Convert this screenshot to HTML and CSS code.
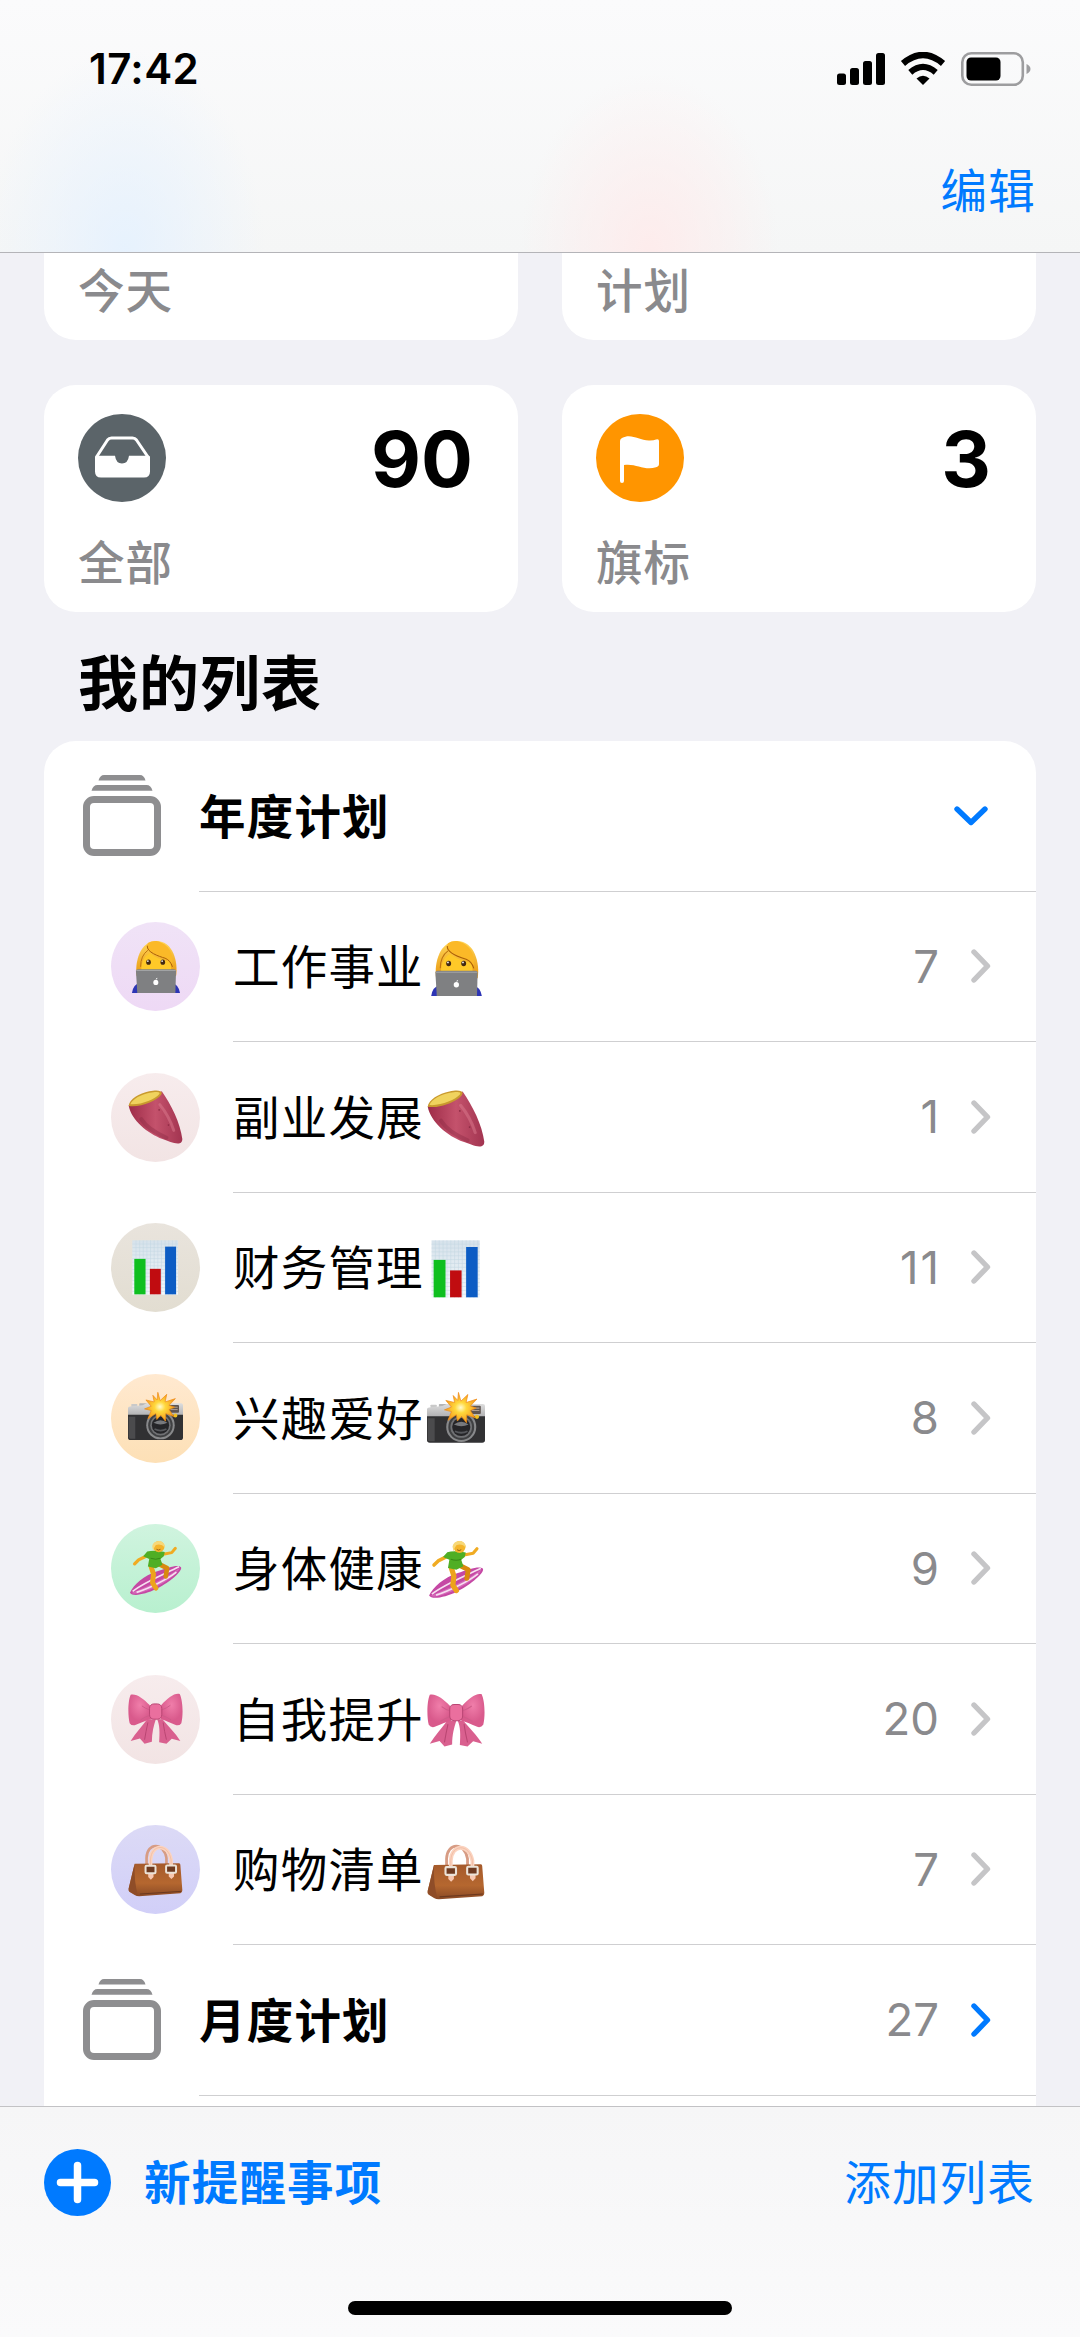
FILE: index.html
```html
<!DOCTYPE html>
<html lang="zh-CN">
<head>
    <meta charset="UTF-8" />
    <meta name="viewport" content="width=device-width, initial-scale=1.0" />
    <title>提醒事项</title>
    <link rel="stylesheet" href="styles.css">
</head>
<body>
    <!-- shared icons -->
    <svg class="sprite" width="0" height="0">
        <defs>
            <linearGradient id="hair" x1="0" y1="0" x2="0" y2="1">
                <stop offset="0" stop-color="#ffd65a"/><stop offset="1" stop-color="#e8960c"/>
            </linearGradient>
            <linearGradient id="skin" x1="0" y1="0" x2="1" y2="0">
                <stop offset="0" stop-color="#9e2c48"/><stop offset="0.5" stop-color="#c4526c"/><stop offset="1" stop-color="#a23450"/>
            </linearGradient>
            <linearGradient id="chartbg" x1="0" y1="0" x2="0" y2="1">
                <stop offset="0" stop-color="#d6e2eb"/><stop offset="1" stop-color="#f4f8fb"/>
            </linearGradient>
            <linearGradient id="silver" x1="0" y1="0" x2="0" y2="1">
                <stop offset="0" stop-color="#dedede"/><stop offset="1" stop-color="#a9a9ab"/>
            </linearGradient>
            <linearGradient id="leather" x1="0" y1="0" x2="0" y2="1">
                <stop offset="0" stop-color="#a55a2c"/><stop offset="0.6" stop-color="#b5672f"/><stop offset="1" stop-color="#8a4a26"/>
            </linearGradient>
            <radialGradient id="burst">
                <stop offset="0" stop-color="#fffbd0"/><stop offset="0.35" stop-color="#ffd83c"/><stop offset="1" stop-color="#f59a1c"/>
            </radialGradient>
            <radialGradient id="pink" cx="0.5" cy="0.35">
                <stop offset="0" stop-color="#f07eaa"/><stop offset="1" stop-color="#d95a8c"/>
            </radialGradient>
        </defs>

        <symbol id="i-stack" viewBox="0 0 78 82">
            <path d="M15.500 5.500Q17 0 21 0H57Q61 0 62.500 5.500Z" fill="#8e8e90"/>
            <path d="M8.500 15.800Q10 10 14.500 10H63.500Q68 10 69.500 15.800Z" fill="#8e8e90"/>
            <rect x="3.500" y="24.500" width="71" height="53" rx="7.500" fill="none" stroke="#8e8e90" stroke-width="7"/>
        </symbol>
        <symbol id="i-right" viewBox="0 0 20 34">
            <path d="M3 3L16.500 17L3 31" fill="none" stroke="currentColor" stroke-width="5.400" stroke-linecap="round" stroke-linejoin="round"/>
        </symbol>
        <symbol id="i-down" viewBox="0 0 34 20">
            <path d="M3 3L17 16.500L31 3" fill="none" stroke="currentColor" stroke-width="5.400" stroke-linecap="round" stroke-linejoin="round"/>
        </symbol>

        <symbol id="e-coder" viewBox="0 0 166 166">
            <path d="M12 163Q16 136 36 133H132Q152 136 157 163Z" fill="#2d35b5"/>
            <path d="M26 112C20 70 36 6 86 6C136 6 152 70 145 112Z" fill="url(#hair)"/>
            <path d="M42 108C36 76 46 54 66 42C84 58 108 64 126 68C132 82 132 96 126 108Z" fill="#ffc928"/>
            <path d="M60 12C54 28 60 36 74 44C98 56 120 56 132 82C142 50 124 14 86 6Q70 5 60 12Z" fill="#fbb928"/>
            <path d="M58 20C56 40 92 52 112 58Q128 64 134 84" fill="none" stroke="#a95e08" stroke-width="3"/>
            <path d="M60 34Q38 50 38 84" fill="none" stroke="#bd7310" stroke-width="3"/>
            <ellipse cx="62" cy="70" rx="7" ry="8" fill="#442a12"/>
            <ellipse cx="105" cy="70" rx="7" ry="8" fill="#442a12"/>
            <circle cx="60" cy="67" r="2.500" fill="#fff"/><circle cx="103" cy="67" r="2.500" fill="#fff"/>
            <path d="M24 96Q24 91 30 91H139Q145 91 145 96L143 163H28Z" fill="#7f8082"/>
            <path d="M25 95H144" stroke="#a3a4a6" stroke-width="3"/>
            <ellipse cx="84" cy="131" rx="7.500" ry="8" fill="#fff"/>
            <path d="M84 122Q84 117 89 117Q89 122 84 122Z" fill="#fff"/>
        </symbol>

        <symbol id="e-potato" viewBox="0 0 166 166">
            <path d="M2 47C10 92 60 132 104 148C124 154 140 164 156 161Q164 158 164 148C158 100 130 44 102 4Z" fill="url(#skin)"/>
            <path d="M40 88Q60 120 116 144" fill="none" stroke="#852440" stroke-width="12" opacity="0.350" stroke-linecap="round"/>
            <path d="M96 44Q124 78 138 122" fill="none" stroke="#dc7a8e" stroke-width="9" opacity="0.500" stroke-linecap="round"/>
            <path d="M2 48C4 28 34 10 64 4C90-2 108 2 100 14C88 32 36 54 2 48Z" fill="#c99a2e"/>
            <path d="M7 43C14 26 40 13 66 8C86 4 100 5 94 13C82 28 38 46 7 43Z" fill="#f0d35e"/>
            <circle cx="94" cy="60" r="2.500" fill="#8d2b44"/><circle cx="122" cy="106" r="2.500" fill="#8d2b44"/>
        </symbol>

        <symbol id="e-chart" viewBox="0 0 166 166">
            <rect x="13" y="1" width="138" height="164" fill="url(#chartbg)"/>
            <path d="M13 12H151M13 23H151M13 34H151M13 45H151M13 56H151M13 67H151M13 78H151M13 89H151M13 100H151M13 111H151M13 122H151M13 133H151M13 144H151M13 155H151M24 1V165M35 1V165M46 1V165M57 1V165M68 1V165M79 1V165M90 1V165M101 1V165M112 1V165M123 1V165M134 1V165M145 1V165" stroke="#c3d6e3" stroke-width="1.500"/>
            <rect x="19" y="57" width="34" height="107" fill="#0fbf1f"/>
            <rect x="66" y="87" width="33" height="77" fill="#c00c10"/>
            <rect x="112" y="20" width="33" height="144" fill="#0c5cc4"/>
        </symbol>

        <symbol id="e-camera" viewBox="0 0 166 166">
            <rect x="10" y="39" width="18" height="12" rx="2" fill="#c9c9c9"/>
            <rect x="34" y="37" width="24" height="12" rx="2" fill="#b5b5b5"/>
            <path d="M0 52Q0 47 6 47L44 43L56 37H160Q166 37 166 43V80H0Z" fill="url(#silver)"/>
            <path d="M0 72H166V140Q166 148 158 148H8Q0 148 0 140Z" fill="#313133"/>
            <path d="M2 78H22V144H8Q2 144 2 138Z" fill="#4b4b4d"/>
            <rect x="124" y="42" width="30" height="24" rx="3" fill="#5f5550"/>
            <path d="M128 49H150M128 56H150" stroke="#ad9c90" stroke-width="3"/>
            <circle cx="143" cy="74" r="6" fill="#f0c022"/>
            <circle cx="98" cy="103" r="43" fill="#88898b"/>
            <circle cx="98" cy="103" r="37" fill="#3f4042"/>
            <circle cx="98" cy="103" r="31" fill="#707174"/>
            <circle cx="98" cy="103" r="26" fill="#252528"/>
            <path d="M77 96Q98 80 119 96Q98 106 77 96Z" fill="#77797d"/>
            <path d="M80 115Q98 124 116 115" stroke="#55575b" stroke-width="5" fill="none"/>
            <path d="M90 4L97 29L117 10L112 33L143 23L124 43L141 49L124 56L138 77L114 68L113 91L99 73L87 86L84 68L60 84L70 59L50 54L70 46L54 27L79 33L75 13L88 27Z" fill="url(#burst)" stroke="#ef8a14" stroke-width="2"/>
        </symbol>

        <symbol id="e-surfer" viewBox="0 0 166 166">
            <path d="M6 156C16 132 50 104 86 92C122 80 150 70 160 79C166 92 120 128 84 146C54 160 14 170 6 156Z" fill="#c548a4"/>
            <path d="M10 157C50 142 120 110 156 81C150 100 110 128 78 142C50 154 20 164 10 157Z" fill="#d568b8"/>
            <path d="M14 152C50 124 110 100 154 78M26 155C64 143 118 116 146 94" fill="none" stroke="#f6dff0" stroke-width="5"/>
            <path d="M70 78L77 100L74 126L84 142" fill="none" stroke="#eda31c" stroke-width="15" stroke-linecap="round" stroke-linejoin="round"/>
            <path d="M94 70L118 82L114 107" fill="none" stroke="#d9890f" stroke-width="14" stroke-linecap="round" stroke-linejoin="round"/>
            <path d="M62 42L32 57L20 69" fill="none" stroke="#f0ab22" stroke-width="10" stroke-linecap="round" stroke-linejoin="round"/>
            <path d="M106 40L132 35L143 22" fill="none" stroke="#f0ab22" stroke-width="9" stroke-linecap="round" stroke-linejoin="round"/>
            <path d="M58 32Q78 26 111 33L108 46L98 54L104 72L84 82L60 77L64 54L46 46Z" fill="#4fae25"/>
            <path d="M68 52Q84 58 98 52" stroke="#378a17" stroke-width="3" fill="none"/>
            <ellipse cx="93" cy="17" rx="17" ry="17" fill="#f4b52c"/>
            <path d="M73 16Q76-1 98 0Q112 6 112 20Q100 6 84 12Q78 20 76 30Z" fill="#f7d878"/>
            <path d="M86 25Q92 30 98 25" stroke="#8a4d12" stroke-width="2.500" fill="none"/>
        </symbol>

        <symbol id="e-bow" viewBox="0 0 166 166">
            <path d="M58 82C42 104 24 122 8 148L36 140L50 156L72 150C72 122 78 100 84 82Z" fill="#d9608f"/>
            <path d="M104 82C122 104 142 122 158 148L132 141L116 156L94 152C96 122 96 100 88 82Z" fill="#d9608f"/>
            <path d="M60 92Q54 120 50 144M106 92Q110 120 116 144" fill="none" stroke="#b94672" stroke-width="3"/>
            <path d="M66 40C46 20 26 4 8 8C0 26-1 70 5 94Q12 104 24 99C42 92 56 84 70 82Z" fill="url(#pink)"/>
            <path d="M100 40C120 18 140 2 156 6C166 26 167 70 161 94Q154 104 142 99C124 92 112 84 98 82Z" fill="url(#pink)"/>
            <path d="M66 54Q52 50 42 42M66 70Q50 76 38 84M102 54Q118 48 128 40M102 70Q118 76 130 84" fill="none" stroke="#cf5c89" stroke-width="3"/>
            <rect x="65" y="36" width="37" height="46" rx="13" fill="#ea6f9e" stroke="#ba4674" stroke-width="3"/>
        </symbol>

        <symbol id="e-bag" viewBox="0 0 166 166">
            <path d="M56 84V48C58 0 108 0 116 48V82" fill="none" stroke="#d79c84" stroke-width="8"/>
            <path d="M20 66L154 64Q158 64 158 69L164 146Q164 154 158 155L34 164Q26 164 20 160L4 150Q0 146 2 140Z" fill="url(#leather)"/>
            <path d="M20 66L2 140Q1 148 8 152L30 162Q18 120 20 66Z" fill="#8f4d28"/>
            <path d="M36 157L160 149" stroke="#6b381f" stroke-width="3"/>
            <path d="M68 76V54C70 4 122 4 130 54V78" fill="none" stroke="#fbd3bf" stroke-width="11"/>
            <path d="M68 76V54C70 4 122 4 130 54V78" fill="none" stroke="#edb69d" stroke-width="2"/>
            <path d="M61 94H77V106L69 114L61 106ZM123 92H139V104L131 112L123 104Z" fill="#f7c7b0"/>
            <rect x="53" y="72" width="30" height="22" rx="3" fill="#6e3a20" stroke="#ece3d8" stroke-width="6"/>
            <rect x="115" y="71" width="30" height="22" rx="3" fill="#6e3a20" stroke="#ece3d8" stroke-width="6"/>
        </symbol>
    </svg>

    <header class="topbar">
        <div class="status">
            <span class="time">17:42</span>
            <div class="status-icons">
                <svg width="48" height="32" viewBox="0 0 48 32">
                    <rect x="0" y="20.500" width="9" height="11.500" rx="2.500"/>
                    <rect x="13" y="15" width="9" height="17" rx="2.500"/>
                    <rect x="26" y="8" width="9" height="24" rx="2.500"/>
                    <rect x="39" y="0" width="9" height="32" rx="2.500"/>
                </svg>
                <svg width="46" height="33" viewBox="0 0 46 33">
                    <path d="M3 11.500Q23-5.500 43 11.500" fill="none" stroke="#000" stroke-width="6.400"/>
                    <path d="M10.300 20.300Q23 9.500 35.700 20.300" fill="none" stroke="#000" stroke-width="6.200"/>
                    <path d="M16.500 26.500Q23 21 29.500 26.500L23 33Z"/>
                </svg>
                <svg width="70" height="34" viewBox="0 0 70 34">
                    <rect x="1.300" y="1.300" width="60.500" height="31.400" rx="9" fill="none" stroke="#9d9d9f" stroke-width="2.600"/>
                    <rect x="5.500" y="5.500" width="34" height="23" rx="4.500"/>
                    <path d="M65.500 12Q69.500 14 69.500 17T65.500 22Z" fill="#9d9d9f"/>
                </svg>
            </div>
        </div>
        <a class="link edit">编辑</a>
    </header>

    <main class="content">
        <section class="cards">
            <div class="card"><span class="card-label">今天</span></div>
            <div class="card"><span class="card-label">计划</span></div>
            <div class="card">
                <div class="card-top">
                    <svg width="88" height="88" viewBox="0 0 88 88">
                        <circle cx="44" cy="44" r="44" fill="#5b6469"/>
                        <path d="M18.500 43L29.500 26Q31 24 33.500 24H54.500Q57 24 58.500 26L70 43" fill="none" stroke="#fff" stroke-width="3"/>
                        <path d="M17 43Q17 41.800 18.500 41.800H37Q38 49.500 44 49.500T51 41.800H70.500Q72 41.800 72 43V57.500Q72 63.500 66 63.500H23Q17 63.500 17 57.500Z" fill="#fff"/>
                    </svg>
                    <span class="card-num">90</span>
                </div>
                <span class="card-label">全部</span>
            </div>
            <div class="card">
                <div class="card-top">
                    <svg width="88" height="88" viewBox="0 0 88 88">
                        <circle cx="44" cy="44" r="44" fill="#ff9500"/>
                        <path d="M24 27Q24 25 26 24C36 19 43 27 54 26.500Q58 26.500 60 25.500Q63 24.500 63 27V50Q63 52.500 60 53.300C48 57 40 49 28 51V67Q28 69 26 69T24 67Z" fill="#fff"/>
                    </svg>
                    <span class="card-num">3</span>
                </div>
                <span class="card-label">旗标</span>
            </div>
        </section>

        <h1>我的列表</h1>

        <ul class="list">
            <li class="row group">
                <svg class="stack"><use href="#i-stack"/></svg>
                <div class="row-body">
                    <span class="name">年度计划</span>
                    <svg class="down"><use href="#i-down"/></svg>
                </div>
            </li>
            <li class="row">
                <span class="badge lilac"><svg><use href="#e-coder"/></svg></span>
                <div class="row-body">
                    <span class="name">工作事业</span><svg class="emoji"><use href="#e-coder"/></svg>
                    <span class="count">7</span><svg class="right"><use href="#i-right"/></svg>
                </div>
            </li>
            <li class="row">
                <span class="badge rose"><svg><use href="#e-potato"/></svg></span>
                <div class="row-body">
                    <span class="name">副业发展</span><svg class="emoji"><use href="#e-potato"/></svg>
                    <span class="count">1</span><svg class="right"><use href="#i-right"/></svg>
                </div>
            </li>
            <li class="row">
                <span class="badge sand"><svg><use href="#e-chart"/></svg></span>
                <div class="row-body">
                    <span class="name">财务管理</span><svg class="emoji"><use href="#e-chart"/></svg>
                    <span class="count wide">11</span><svg class="right"><use href="#i-right"/></svg>
                </div>
            </li>
            <li class="row">
                <span class="badge peach"><svg><use href="#e-camera"/></svg></span>
                <div class="row-body">
                    <span class="name">兴趣爱好</span><svg class="emoji"><use href="#e-camera"/></svg>
                    <span class="count">8</span><svg class="right"><use href="#i-right"/></svg>
                </div>
            </li>
            <li class="row">
                <span class="badge mint"><svg><use href="#e-surfer"/></svg></span>
                <div class="row-body">
                    <span class="name">身体健康</span><svg class="emoji"><use href="#e-surfer"/></svg>
                    <span class="count">9</span><svg class="right"><use href="#i-right"/></svg>
                </div>
            </li>
            <li class="row">
                <span class="badge rose"><svg><use href="#e-bow"/></svg></span>
                <div class="row-body">
                    <span class="name">自我提升</span><svg class="emoji"><use href="#e-bow"/></svg>
                    <span class="count">20</span><svg class="right"><use href="#i-right"/></svg>
                </div>
            </li>
            <li class="row">
                <span class="badge violet"><svg><use href="#e-bag"/></svg></span>
                <div class="row-body">
                    <span class="name">购物清单</span><svg class="emoji"><use href="#e-bag"/></svg>
                    <span class="count">7</span><svg class="right"><use href="#i-right"/></svg>
                </div>
            </li>
            <li class="row group">
                <svg class="stack"><use href="#i-stack"/></svg>
                <div class="row-body">
                    <span class="name">月度计划</span>
                    <span class="count">27</span><svg class="right"><use href="#i-right"/></svg>
                </div>
            </li>
        </ul>
    </main>

    <footer class="toolbar">
        <div class="actions">
            <a class="link new">
                <svg width="67" height="67" viewBox="0 0 67 67">
                    <circle cx="33.500" cy="33.500" r="33.500" fill="#007aff"/>
                    <path d="M33.500 16.500V50.500M16.500 33.500H50.500" stroke="#fff" stroke-width="7.500" stroke-linecap="round"/>
                </svg>
                <span class="action-text">新提醒事项</span>
            </a>
            <a class="link action-text">添加列表</a>
        </div>
        <div class="home-bar"></div>
    </footer>
</body>
</html>
```
FILE: styles.css
```css
* {
    box-sizing: border-box;
}

html, body {
    height: 100%;
    margin: 0;
    padding: 0;
    overflow: hidden;
}

body {
    background: #f1f1f6;
    display: flex;
    flex-direction: column;
    font-family: Inter, "Noto Sans CJK SC", sans-serif;
    font-size: 46.5px;
    color: #000;
}

svg {
    display: block;
    flex: none;
}

.sprite {
    position: absolute;
}

/* TOP BAR */
.topbar {
    height: 253px;
    flex: none;
    background:
        radial-gradient(ellipse 140px 200px at 125px 250px, rgba(228, 241, 255, 0.85), rgba(228, 241, 255, 0)),
        radial-gradient(ellipse 130px 180px at 650px 253px, rgba(255, 234, 234, 0.85), rgba(255, 234, 234, 0)),
        linear-gradient(#fbfbfc, #f5f6f6);
    border-bottom: 1.5px solid #b4b4b8;
    display: flex;
    flex-direction: column;
}

.status {
    display: flex;
    justify-content: space-between;
    align-items: center;
    height: 137px;
    padding: 0 49px 0 89px;
}

.time {
    font-size: 42px;
    font-weight: 600;
    letter-spacing: 0.4px;
}

.status-icons {
    display: flex;
    align-items: center;
    gap: 15px;
}

.link {
    color: #007aff;
    letter-spacing: 1.2px;
}

.edit {
    align-self: flex-end;
    line-height: 108px;
    margin-right: 44px;
}

/* CONTENT */
.content {
    flex: 1;
    min-height: 0;
    overflow: hidden;
    padding: 0 44px;
}

.cards {
    display: grid;
    grid-template-columns: 1fr 1fr;
    grid-auto-rows: 227px;
    gap: 45px 44px;
    margin-top: -140px;
}

.card {
    background: #fff;
    border-radius: 32px;
    padding: 29px 45px 14px 34px;
    display: flex;
    flex-direction: column;
    justify-content: flex-end;
}

.card-top {
    display: flex;
    justify-content: space-between;
    align-items: center;
    height: 88px;
    margin-bottom: auto;
}

.card-num {
    font-size: 77px;
    font-weight: 700;
    line-height: 88px;
    padding-top: 2px;
}

.card-label {
    color: #8a8a8d;
    font-weight: 500;
    line-height: 70px;
    letter-spacing: 1px;
}

h1 {
    margin: 0;
    padding: 13px 0 0 34px;
    height: 129px;
    line-height: 118px;
    font-size: 60px;
    font-weight: 700;
    letter-spacing: 1px;
}

.list {
    margin: 0;
    padding: 0;
    list-style: none;
    background: #fff;
    border-radius: 32px 32px 0 0;
    height: 1400px;
}

.row {
    display: flex;
    align-items: center;
    height: 150.5px;
    padding-left: 67px;
}

.row.group {
    padding-left: 39px;
}

.row-body {
    flex: 1;
    height: 100%;
    display: flex;
    align-items: center;
    margin-left: 33px;
    padding-right: 45px;
    border-bottom: 1.5px solid #cfcfd1;
}

.group .row-body {
    margin-left: 38px;
}

.name {
    letter-spacing: 1.2px;
    padding-bottom: 5px;
}

.group .name {
    font-weight: 700;
}

.stack {
    width: 78px;
    height: 82px;
}

.badge {
    width: 89px;
    height: 89px;
    border-radius: 50%;
    display: flex;
    align-items: center;
    justify-content: center;
}

.badge svg {
    width: 55px;
    height: 55px;
}

.lilac { background: linear-gradient(#f0e3f7, #eed9f5); }
.rose { background: linear-gradient(#f7eced, #f2e4e4); }
.sand { background: linear-gradient(#e9e4dd, #e2ddd1); }
.peach { background: linear-gradient(#ffe9d0, #fde0b6); }
.mint { background: linear-gradient(#d0f4df, #b8f0cf); }
.violet { background: linear-gradient(#dcdaf6, #d1cff8); }

.emoji {
    width: 58px;
    height: 58px;
    margin: 4px 0 0 3px;
}

.count {
    margin-left: auto;
    color: #8a8a8d;
    font-size: 45.5px;
}

.wide {
    letter-spacing: 2px;
    margin-right: -2px;
}

.right {
    width: 20px;
    height: 34px;
    margin-left: 32px;
    color: #c5c5c7;
}

.down {
    width: 34px;
    height: 20px;
    margin: 0 3px 0 auto;
    color: #007aff;
}

.group .right {
    color: #007aff;
}

/* BOTTOM BAR */
.toolbar {
    flex: none;
    height: 231px;
    background: linear-gradient(#f6f6f7, #fafafb);
    border-top: 1.5px solid #c2c2c5;
}

.actions {
    display: flex;
    justify-content: space-between;
    align-items: center;
    height: 150px;
    padding: 0 45px 0 44px;
}

.action-text {
    padding-bottom: 6px;
}

.new {
    display: flex;
    align-items: center;
    gap: 33px;
    font-weight: 700;
}

.home-bar {
    width: 384px;
    height: 14px;
    margin: 44px auto 0;
    border-radius: 7px;
    background: #000;
}
```
